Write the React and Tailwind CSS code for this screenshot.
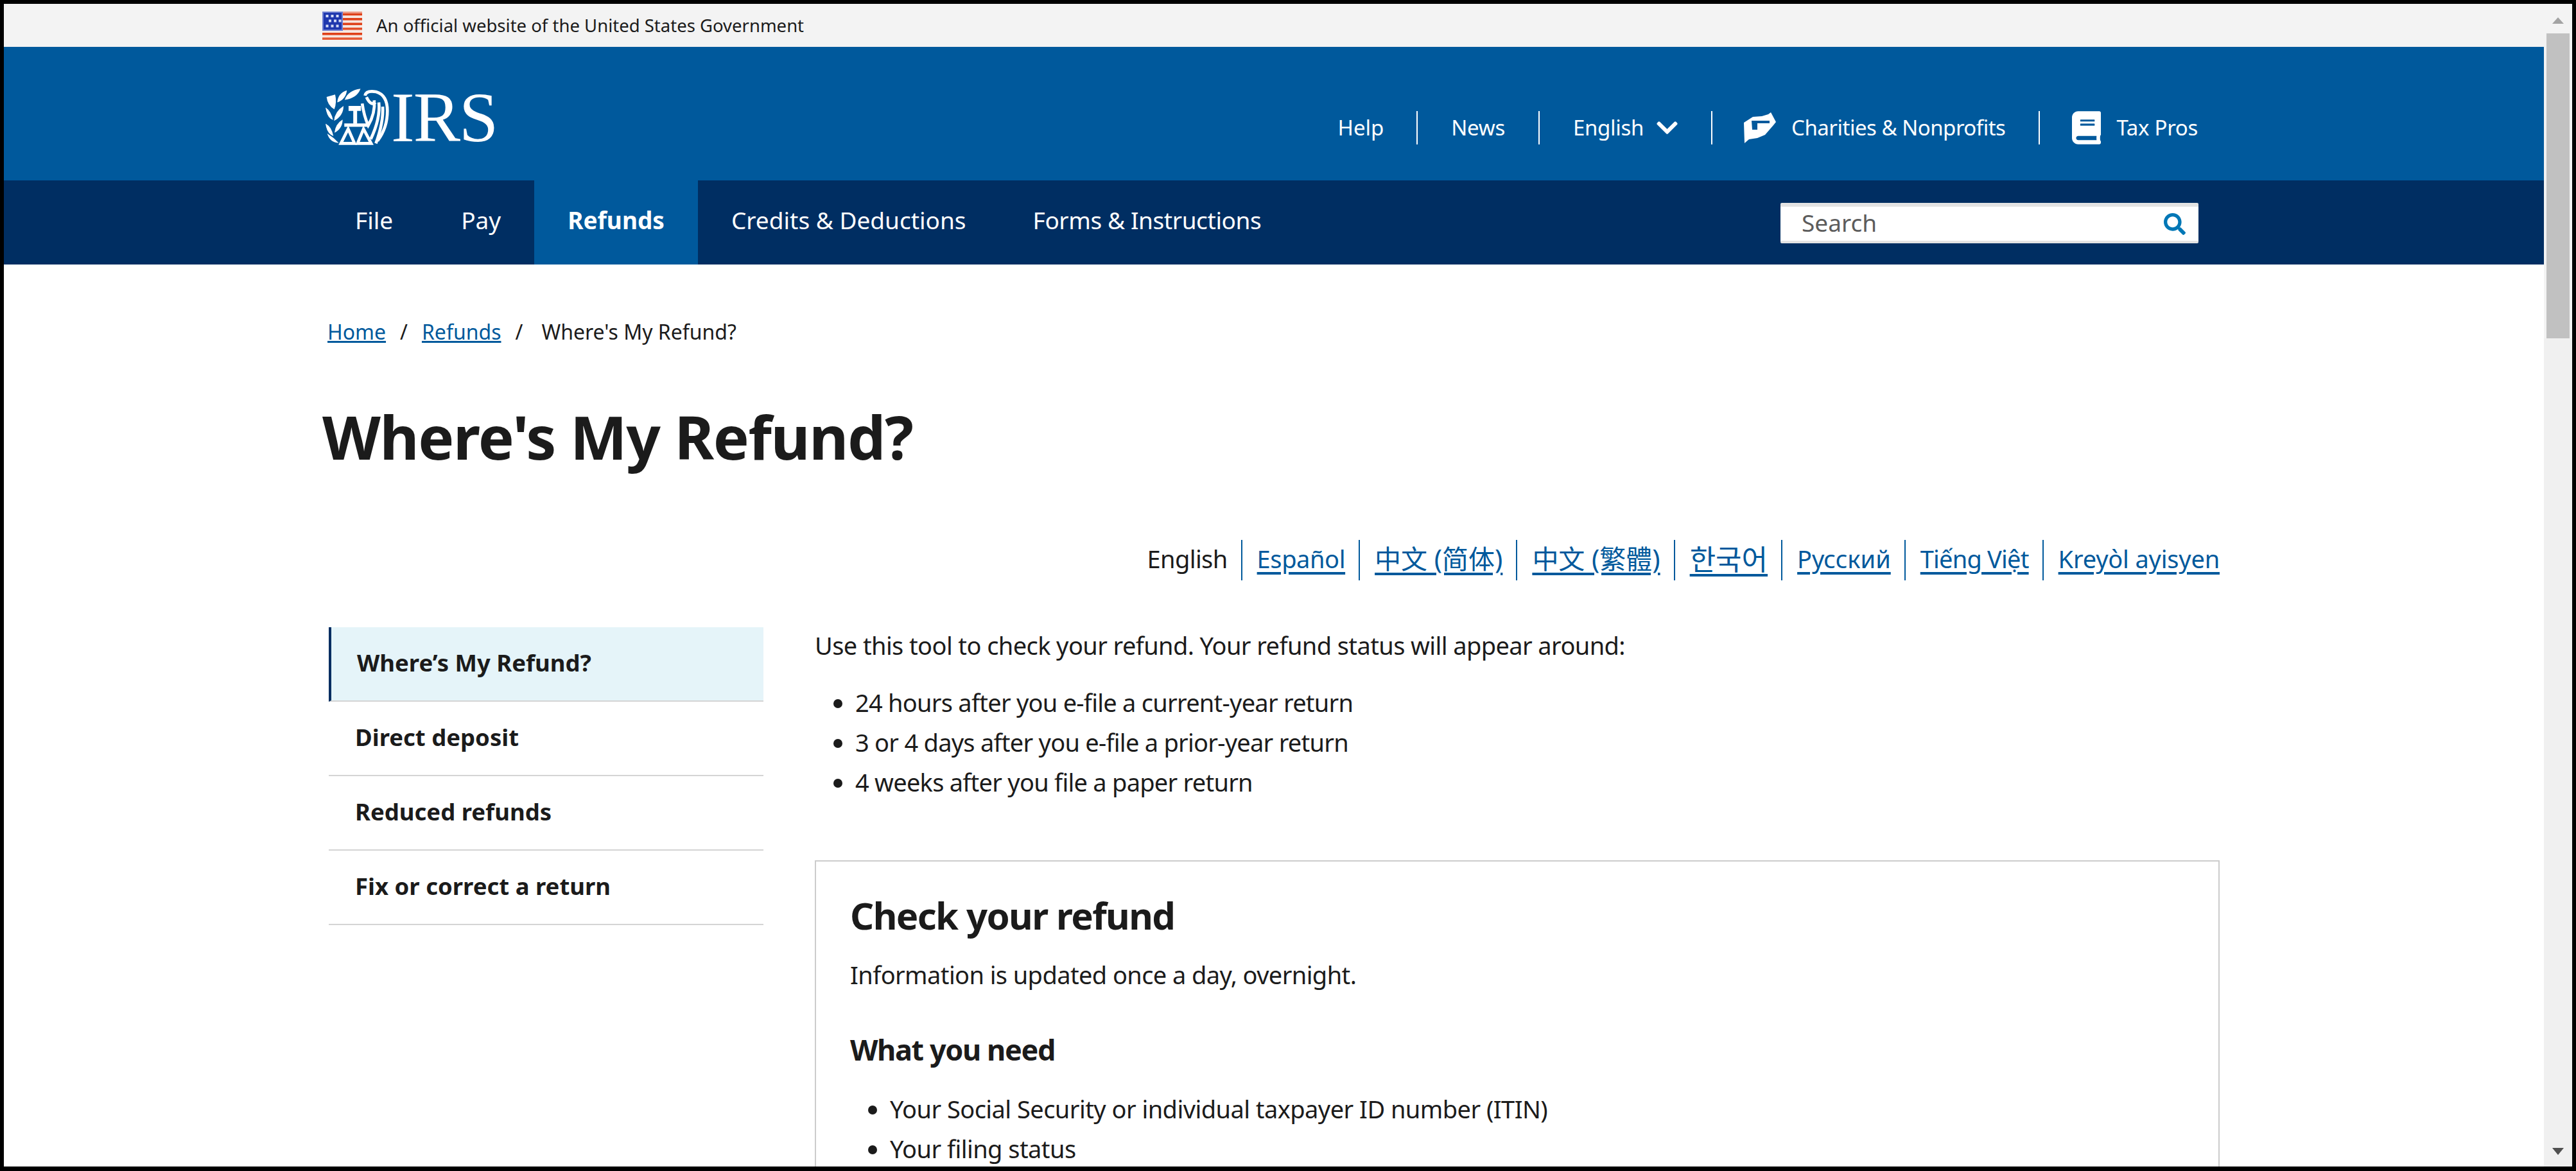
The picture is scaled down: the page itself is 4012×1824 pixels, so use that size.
import { FaBook, FaChevronDown, FaSearch } from 'react-icons/fa';

const font = { fontFamily: '"Noto Sans", "Noto Sans CJK SC", "Noto Sans CJK KR", sans-serif' };

function Flag() {
    const redRows = [2.5, 10, 17.5, 25, 33, 40.5];
    const stars = [[5.5, 7], [13.5, 7], [21.5, 7], [10, 14.5], [18, 14.5], [25.5, 14.5], [5.5, 22.5], [13.5, 22.5], [21.5, 22.5]];
    return (
        <svg width="62" height="44" viewBox="0 0 62 44" className="shrink-0">
            <rect width="62" height="44" fill="#f6e6e0" />
            <rect width="62" height="2" fill="#ee9c86" />
            {redRows.map((y, i) => (
                <rect key={y} y={y} width="62" height="3.6" fill={i === 3 ? '#e2502c' : '#df4019'} />
            ))}
            <rect y="41" width="62" height="3" fill="#e65a36" />
            <rect width="32" height="30" fill="#6e7fd2" />
            <rect x="2" y="2" width="28" height="26" fill="#1f38ae" />
            {stars.map(([x, y]) => (
                <rect key={`${x}-${y}`} x={x} y={y - 2} width="4" height="4" fill="#d5dcf5" />
            ))}
        </svg>
    );
}

function Seal() {
    return (
        <svg width="103" height="93" viewBox="105 82 310 280" className="shrink-0">
            <g fill="#fff">
                <path d="M198 138 Q212 94 272 86 Q256 130 198 138Z" />
                <path d="M163 150 Q166 106 208 93 Q204 134 163 150Z" />
                <path d="M113 124 L153 113 Q162 150 149 182 Q116 162 113 124Z" />
                <path d="M108 174 Q134 188 143 232 Q116 224 108 174Z" />
                <path d="M148 236 Q150 194 192 166 Q193 212 148 236Z" />
                <path d="M108 250 Q136 262 145 308 Q114 296 108 250Z" />
                <path d="M150 292 Q154 250 188 230 Q188 272 150 292Z" />
                <path d="M116 296 Q146 314 170 340 Q128 338 116 296Z" />
                <path d="M216 166 H274 V190 H256 V250 H238 V190 H216Z" />
                <path d="M196 248 H310 V264 H196Z" />
            </g>
            <g fill="none" stroke="#fff" strokeWidth="14">
                <path d="M214 274 L180 342 H244Z" />
                <path d="M286 274 L258 342 H322Z" />
                <path d="M280 155 Q288 212 308 258 Q342 200 336 140" />
                <path d="M293 118 Q298 92 345 100 Q398 115 398 190 Q398 270 352 330" />
                <path d="M358 150 Q366 225 320 322" />
                <path d="M376 170 Q380 245 344 342" />
                <path d="M300 125 Q320 168 342 150" />
            </g>
        </svg>
    );
}

function HandsIcon() {
    return (
        <svg width="50" height="48" viewBox="0 0 50 48" className="shrink-0" fill="#fff">
            <path fillRule="evenodd" d="M42 0 L50 15 L46 20 L33 35 L21 40 L8 42 L1 48 L0 16 L14 7 L28 6 L38 3Z M12 13 H40 V17 H21 V27 H13Z" />
        </svg>
    );
}

function TopLink({ children, className = '' }) {
    return <span className={`flex items-center h-full text-[33px] text-white ${className}`}>{children}</span>;
}

function Header() {
    return (
        <header>
            <div className="h-[67px] bg-[#f3f3f3] pl-[496px] flex items-center gap-[22px] text-[#1b1b1b] text-[27.5px]">
                <Flag />
                <span>An official website of the United States Government</span>
            </div>
            <div className="h-[208px] bg-[#00599c] pl-[500px] pr-[539px] flex items-center justify-between">
                <div className="flex items-center mt-[12px]">
                    <Seal />
                    <span className="text-[110px] leading-none text-white tracking-[-2px]" style={{ fontFamily: '"Liberation Serif", serif' }}>IRS</span>
                </div>
                <div className="flex items-center h-[52px] mt-[44px]">
                    <TopLink className="pr-[51px] border-r-2 border-white">Help</TopLink>
                    <TopLink className="px-[52px] border-r-2 border-white tracking-[-0.3px]">News</TopLink>
                    <TopLink className="px-[52px] border-r-2 border-white gap-[20px] tracking-[-0.3px]">English <FaChevronDown className="w-[33px] h-[38px]" /></TopLink>
                    <TopLink className="pl-[49px] pr-[52px] border-r-2 border-white gap-[24px] tracking-[-0.5px]"><HandsIcon />Charities &amp; Nonprofits</TopLink>
                    <TopLink className="pl-[50px] gap-[24px] tracking-[-0.3px]"><FaBook className="w-[45px] h-[52px]" />Tax Pros</TopLink>
                </div>
            </div>
            <div className="h-[131px] bg-[#002e62] pl-[496px] pr-[538px] flex items-stretch justify-between">
                <nav className="flex items-stretch text-[37px] text-white">
                    <a className="flex items-center pb-[8px] pl-[51px] pr-[54px]">File</a>
                    <a className="flex items-center pb-[8px] px-[52px]">Pay</a>
                    <a className="flex items-center pb-[8px] px-[52px] bg-[#00599c] font-bold">Refunds</a>
                    <a className="flex items-center pb-[8px] px-[52px]">Credits &amp; Deductions</a>
                    <a className="flex items-center pb-[8px] px-[52px] tracking-[-0.4px]">Forms &amp; Instructions</a>
                </nav>
                <div className="self-center mt-[2px] w-[651px] h-[63px] bg-white rounded-[2px] border-t-[6px] border-b-[4px] border-[#e3e3e3] flex items-center justify-between pl-[33px] pr-[20px]">
                    <span className="text-[37px] text-[#5c5c5c] pb-[4px]">Search</span>
                    <FaSearch size={34} className="text-[#0077b6]" />
                </div>
            </div>
        </header>
    );
}

function Breadcrumb() {
    return (
        <div className="flex items-center text-[32px] text-[#1b1b1b] pl-[8px] pt-[84px] leading-[42px]">
            <a className="text-[#00599c] underline">Home</a>
            <span className="mx-[22px]">/</span>
            <a className="text-[#00599c] underline">Refunds</a>
            <span className="mx-[22px]">/</span>
            <span className="ml-[7px]">Where's My Refund?</span>
        </div>
    );
}

const languages = [
    { label: 'Español', size: 'text-[38px] tracking-[-0.4px]' },
    { label: '中文 (简体)', size: 'text-[41px]' },
    { label: '中文 (繁體)', size: 'text-[41px]' },
    { label: '한국어', size: 'text-[44px]' },
    { label: 'Русский', size: 'text-[38px]' },
    { label: 'Tiếng Việt', size: 'text-[38px] tracking-[-0.8px]' },
    { label: 'Kreyòl ayisyen', size: 'text-[38px] tracking-[-0.2px]' },
];

function LanguageBar() {
    return (
        <div className="flex justify-end h-[63px] mt-[96px] text-[38px]">
            <span className="flex items-center pb-[4px] pr-[21px] border-r-2 border-[#00599c] text-[#1b1b1b] tracking-[-0.6px]">English</span>
            {languages.map((lang, i) => (
                <a
                    key={lang.label}
                    className={`flex items-center pb-[4px] pl-[23px] text-[#00599c] underline decoration-[4px] underline-offset-[6px] ${lang.size} ${i < languages.length - 1 ? 'pr-[21px] border-r-2 border-[#00599c]' : ''}`}
                >
                    {lang.label}
                </a>
            ))}
        </div>
    );
}

const sideItems = ['Where’s My Refund?', 'Direct deposit', 'Reduced refunds', 'Fix or correct a return'];

function SideNav() {
    return (
        <aside className="w-[677px] ml-[10px] shrink-0 text-[36.5px] font-bold text-[#1b1b1b]">
            {sideItems.map((item, i) => (
                <div
                    key={item}
                    className={`h-[116px] flex items-center pb-[3px] border-b-2 border-[#d4d4d4] ${i === 0 ? 'bg-[#e5f4f9] border-l-4 border-l-[#002e62] pl-[40px]' : 'pl-[41px]'}`}
                >
                    {item}
                </div>
            ))}
        </aside>
    );
}

function Bullets({ items, gap }) {
    return (
        <ul className={`list-disc ${gap} leading-[62px]`}>
            {items.map(item => <li key={item}>{item}</li>)}
        </ul>
    );
}

function Content() {
    return (
        <main className="ml-[80px] w-[2188px] text-[38px] text-[#1b1b1b] tracking-[-0.6px]">
            <p className="leading-[62px] -mt-[3px]">Use this tool to check your refund. Your refund status will appear around:</p>
            <div className="mt-[27px] tracking-[-0.75px]">
                <Bullets gap="pl-[63px]" items={['24 hours after you e-file a current-year return', '3 or 4 days after you e-file a prior-year return', '4 weeks after you file a paper return']} />
            </div>
            <section className="mt-[91px] min-h-[600px] border-2 border-[#cccccc] pl-[53px] pt-[40px]">
                <h2 className="text-[58px] font-bold leading-[88px] tracking-[-1.6px]">Check your refund</h2>
                <p className="leading-[62px] mt-[17px]">Information is updated once a day, overnight.</p>
                <h3 className="text-[45px] font-bold leading-[62px] mt-[55px] tracking-[-1.4px]">What you need</h3>
                <div className="mt-[30px] tracking-[-0.55px]">
                    <Bullets gap="pl-[62px]" items={['Your Social Security or individual taxpayer ID number (ITIN)', 'Your filing status']} />
                </div>
            </section>
        </main>
    );
}

function Scrollbar() {
    return (
        <div className="w-[44px] shrink-0 bg-[#f0f0f0] flex flex-col items-center justify-between">
            <div className="w-full bg-[#f3f3f3]">
                <div className="flex justify-center pt-[21px] h-[46px]">
                    <div className="w-0 h-0 border-x-[9px] border-x-transparent border-b-[10px] border-b-[#a3a3a3]" />
                </div>
                <div className="mx-[4px] h-[475px] bg-[#c1c1c1]" />
            </div>
            <div className="w-0 h-0 mb-[18px] border-x-[9px] border-x-transparent border-t-[11px] border-t-[#505050]" />
        </div>
    );
}

export default function App() {
    return (
        <div className="w-[4012px] h-[1824px] bg-black pt-[6px] pl-[6px] pr-[6px] pb-[7px] overflow-hidden" style={font}>
            <div className="flex h-full bg-white overflow-hidden">
                <div className="flex-1 min-w-0 overflow-hidden">
                    <Header />
                    <div className="pl-[496px] pr-[505px]">
                        <Breadcrumb />
                        <h1 className="text-[94px] font-bold text-[#1b1b1b] leading-[130px] mt-[77px] tracking-[-1.4px]">Where's My Refund?</h1>
                        <LanguageBar />
                        <div className="flex mt-[73px]">
                            <SideNav />
                            <Content />
                        </div>
                    </div>
                </div>
                <Scrollbar />
            </div>
        </div>
    );
}
